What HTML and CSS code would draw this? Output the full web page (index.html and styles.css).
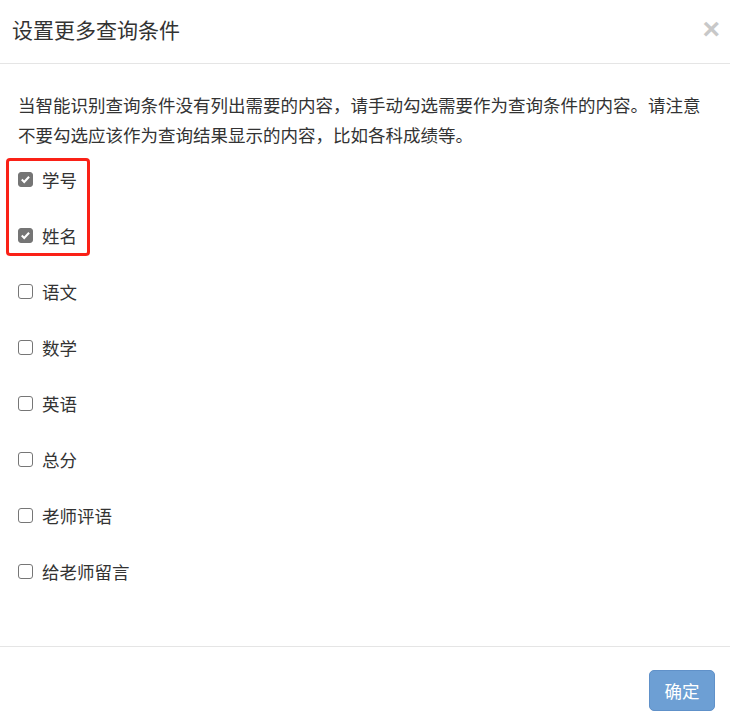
FILE: index.html
```html
<!DOCTYPE html>
<html lang="zh-CN">
<head>
  <meta charset="utf-8">
  <meta name="viewport" content="width=device-width, initial-scale=1">
  <link rel="stylesheet" href="styles.css">
  <title>设置更多查询条件</title>
</head>
<body>
  <div class="modal">
    <!-- Header -->
    <div class="modal_header">
      <h4 class="modal_title">设置更多查询条件</h4>
      <button class="close_btn" type="button">&times;</button>
    </div>
    <!-- Body -->
    <div class="modal_body">
      <p class="hint">当智能识别查询条件没有列出需要的内容，请手动勾选需要作为查询条件的内容。请注意不要勾选应该作为查询结果显示的内容，比如各科成绩等。</p>
      <div class="field_list">
        <div class="highlight"></div>
        <label class="field"><input type="checkbox" checked disabled>学号</label>
        <label class="field"><input type="checkbox" checked disabled>姓名</label>
        <label class="field"><input type="checkbox">语文</label>
        <label class="field"><input type="checkbox">数学</label>
        <label class="field"><input type="checkbox">英语</label>
        <label class="field"><input type="checkbox">总分</label>
        <label class="field"><input type="checkbox">老师评语</label>
        <label class="field"><input type="checkbox">给老师留言</label>
      </div>
    </div>
    <!-- Footer -->
    <div class="modal_footer">
      <button class="ok_btn" type="button">确定</button>
    </div>
  </div>
</body>
</html>
```
FILE: styles.css
```css
body {
  margin: 0px;
  background-color: white;
  color: rgb(51, 51, 51);
  font-family: "Noto Sans CJK SC", "Liberation Sans", sans-serif;
  font-size: 17.5px;
}

.modal {
  width: 730px;
}

.modal_header {
  height: 64px;
  box-sizing: border-box;
  display: flex;
  align-items: center;
  justify-content: space-between;
  padding: 0px 10px 5px 12px;
  border-bottom: 1px solid rgb(229, 229, 229);
}

.modal_title {
  margin: 0px;
  font-size: 21px;
  font-weight: normal;
  line-height: 30px;
}

.close_btn {
  background: none;
  border: none;
  padding: 0px;
  font-family: "Liberation Sans", sans-serif;
  font-size: 30px;
  font-weight: bold;
  line-height: 1;
  color: rgb(200, 200, 200);
  cursor: pointer;
}

.modal_body {
  padding: 26px 18px 47px 18px;
}

.hint {
  margin: 0px;
  line-height: 30px;
}

.field_list {
  position: relative;
  margin-top: 1px;
}

.highlight {
  position: absolute;
  left: -12px;
  top: 7px;
  width: 78px;
  height: 92px;
  border: 3px solid rgb(250, 33, 23);
  border-radius: 4px;
}

.field {
  display: flex;
  align-items: center;
  height: 56px;
  gap: 9px;
}

.field input {
  appearance: none;
  -webkit-appearance: none;
  width: 15px;
  height: 15px;
  margin: 0px;
  border: 1px solid rgb(118, 118, 118);
  border-radius: 3px;
  background-color: white;
  flex: none;
}

.field input:checked {
  border-color: rgb(117, 117, 117);
  background-color: rgb(117, 117, 117);
  background-image: url("data:image/svg+xml,%3Csvg xmlns='http://www.w3.org/2000/svg' viewBox='0 0 15 15'%3E%3Cpath d='M3.2 7.6l2.8 2.7 5.6-6' fill='none' stroke='white' stroke-width='2.4'/%3E%3C/svg%3E");
  background-size: 100% 100%;
}

.modal_footer {
  display: flex;
  justify-content: flex-end;
  padding: 23px 15px 13px 15px;
  border-top: 1px solid rgb(229, 229, 229);
}

.ok_btn {
  width: 66px;
  height: 41px;
  padding: 0px;
  font-family: "Noto Sans CJK SC", sans-serif;
  font-size: 17.5px;
  color: white;
  background-color: rgb(109, 159, 212);
  border: 1px solid rgb(96, 145, 201);
  border-radius: 5px;
}
```
